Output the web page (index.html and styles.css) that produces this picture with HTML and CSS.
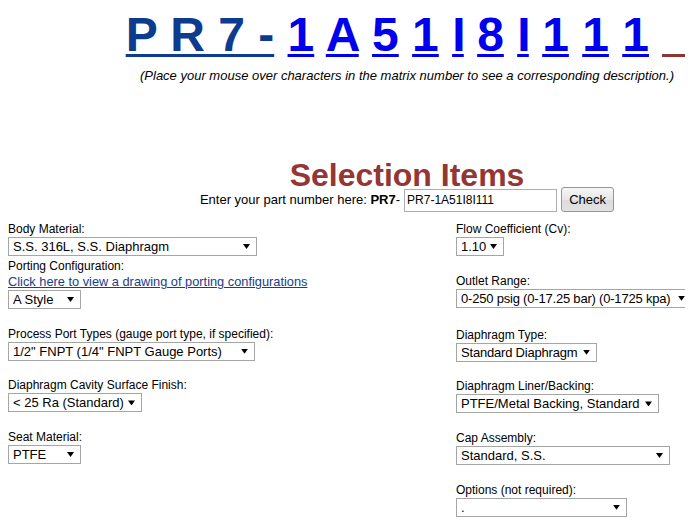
FILE: index.html
```html
<!DOCTYPE html>
<html>
<head>
<meta charset="utf-8">
<title>Selection Items</title>
<link rel="stylesheet" href="styles.css">
</head>
<body>
<div class="page">
  <div class="header">
    <div class="matrix"><a class="code base" href="#">P R 7 -</a> <a class="code" href="#">1</a> <a class="code" href="#">A</a> <a class="code" href="#">5</a> <a class="code" href="#">1</a> <a class="code narrow" href="#">I</a> <a class="code" href="#">8</a> <a class="code narrow" href="#">I</a> <a class="code" href="#">1</a> <a class="code" href="#">1</a> <a class="code" href="#">1</a> <span class="blank"></span></div>
    <p class="hint">(Place your mouse over characters in the matrix number to see a corresponding description.)</p>
    <h1 class="heading">Selection Items</h1>
    <div class="partrow">
      <span class="partlabel">Enter your part number here: <b>PR7</b>-</span>
      <input class="partinput" type="text" value="PR7-1A51I8I111">
      <button class="check" type="button">Check</button>
    </div>
  </div>

  <div class="form">
    <div class="col">
      <div class="field">
        <div class="label">Body Material:</div>
        <span class="sel w-249"><select><option>S.S. 316L, S.S. Diaphragm</option></select></span>
      </div>
      <div class="field snug">
        <div class="label">Porting Configuration:</div>
        <a class="drawlink" href="#">Click here to view a drawing of porting configurations</a>
        <span class="sel w-73"><select><option>A Style</option></select></span>
      </div>
      <div class="field">
        <div class="label">Process Port Types (gauge port type, if specified):</div>
        <span class="sel w-247"><select><option>1/2" FNPT (1/4" FNPT Gauge Ports)</option></select></span>
      </div>
      <div class="field">
        <div class="label">Diaphragm Cavity Surface Finish:</div>
        <span class="sel w-134"><select><option>&lt; 25 Ra (Standard)</option></select></span>
      </div>
      <div class="field">
        <div class="label">Seat Material:</div>
        <span class="sel w-73"><select><option>PTFE</option></select></span>
      </div>
    </div>

    <div class="col">
      <div class="field">
        <div class="label">Flow Coefficient (Cv):</div>
        <span class="sel w-48"><select><option>1.10</option></select></span>
      </div>
      <div class="field">
        <div class="label">Outlet Range:</div>
        <span class="sel w-236"><select class="tight"><option>0-250 psig (0-17.25 bar) (0-1725 kpa)</option></select></span>
      </div>
      <div class="field spaced-lg">
        <div class="label">Diaphragm Type:</div>
        <span class="sel w-141"><select class="tight"><option>Standard Diaphragm</option></select></span>
      </div>
      <div class="field">
        <div class="label">Diaphragm Liner/Backing:</div>
        <span class="sel w-203"><select><option>PTFE/Metal Backing, Standard</option></select></span>
      </div>
      <div class="field">
        <div class="label">Cap Assembly:</div>
        <span class="sel w-214"><select><option>Standard, S.S.</option></select></span>
      </div>
      <div class="field">
        <div class="label">Options (not required):</div>
        <span class="sel w-171"><select><option>.</option></select></span>
      </div>
    </div>
  </div>
</div>
</body>
</html>
```

FILE: styles.css
```css
html {
  overflow: hidden;
  background: #fff;
}

body {
  margin: 8px;
  font-family: "Liberation Sans", Arial, sans-serif;
  color: #000;
}

.header {
  width: 572px;
  margin-left: 113px;
  text-align: center;
}

.matrix {
  font-weight: bold;
  font-size: 48px;
  line-height: 53px;
  white-space: nowrap;
}

.code {
  color: #0000ee;
  text-decoration: underline;
  text-decoration-thickness: 3px;
  text-underline-offset: 3px;
}

.code.base {
  color: #0d3b8e;
}

.code.narrow {
  letter-spacing: -1.7px;
}

.blank {
  display: inline-block;
  width: 26px;
  height: 3px;
  background: #8e3533;
  vertical-align: -6px;
}

.hint {
  margin: 7px 0 0;
  font-style: italic;
  font-size: 13px;
  line-height: 15px;
  white-space: nowrap;
}

.heading {
  margin: 80px 0 0;
  font-size: 32px;
  line-height: 24px;
  font-weight: bold;
  color: #933634;
}

.partrow {
  display: flex;
  justify-content: center;
  align-items: baseline;
  font-size: 13px;
  white-space: nowrap;
}

.partinput {
  box-sizing: border-box;
  width: 153px;
  height: 23px;
  margin: 0 0 0 4px;
  padding: 0 2px;
  border: 1px solid #abadb3;
  font-family: "Liberation Sans", Arial, sans-serif;
  font-size: 12px;
  color: #000;
  background: #fff;
}

.check {
  box-sizing: border-box;
  width: 53px;
  height: 25px;
  margin: 0 0 0 4px;
  padding: 0;
  border: 1px solid #8797b4;
  border-radius: 3px;
  background: linear-gradient(#f6f6f6, #e6e6e6 50%, #dcdcdc 51%, #e2e2e2);
  font-family: "Liberation Sans", Arial, sans-serif;
  font-size: 13px;
  color: #000;
}

.form {
  display: grid;
  grid-template-columns: 448px 229px;
  margin-top: 9px;
}

.col {
  display: flex;
  flex-direction: column;
  align-items: flex-start;
}

.field {
  display: flex;
  flex-direction: column;
  align-items: flex-start;
}

.field + .field {
  margin-top: 16.7px;
}

.field.snug {
  margin-top: 2px;
}

.field.spaced-lg {
  margin-top: 19px;
}

.label {
  font-size: 12px;
  line-height: 16px;
  white-space: nowrap;
}

.drawlink {
  font-size: 12.8px;
  line-height: 16px;
  color: #1b3c8d;
  text-decoration: underline;
  white-space: nowrap;
}

.sel {
  position: relative;
  display: block;
  height: 19px;
}

.sel select {
  -webkit-appearance: none;
  appearance: none;
  box-sizing: border-box;
  display: block;
  width: 100%;
  height: 19px;
  margin: 0;
  padding: 0 14px 0 4px;
  border: 1px solid #a5a5a5;
  border-radius: 0;
  background: #fff;
  font-family: "Liberation Sans", Arial, sans-serif;
  font-size: 13px;
  color: #000;
}

.sel select.tight {
  letter-spacing: -0.2px;
}

.sel::after {
  content: "";
  position: absolute;
  right: 7px;
  top: 7px;
  width: 7px;
  height: 5px;
  background: #000;
  clip-path: polygon(0 0, 100% 0, 50% 100%);
  pointer-events: none;
}

.w-48 { width: 48px; }
.w-73 { width: 73px; }
.w-134 { width: 134px; }
.w-141 { width: 141px; }
.w-171 { width: 171px; }
.w-203 { width: 203px; }
.w-214 { width: 214px; }
.w-236 { width: 236px; }
.w-247 { width: 247px; }
.w-249 { width: 249px; }
```
